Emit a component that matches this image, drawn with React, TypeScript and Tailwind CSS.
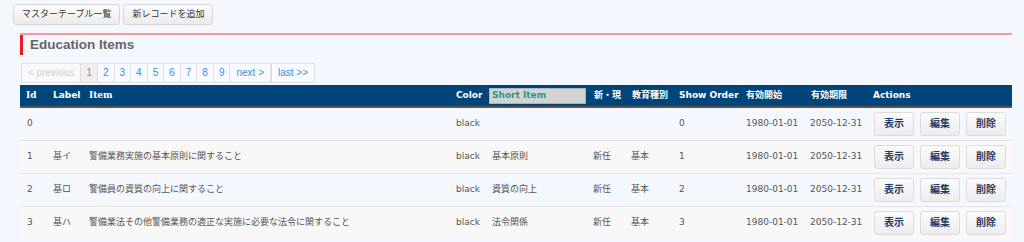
import React from "react";

const rows = [
  { id: "0", label: "", item: "", color: "black", short: "", nw: "", kind: "", order: "0" },
  { id: "1", label: "基イ", item: "警備業務実施の基本原則に関すること", color: "black", short: "基本原則", nw: "新任", kind: "基本", order: "1" },
  { id: "2", label: "基ロ", item: "警備員の資質の向上に関すること", color: "black", short: "資質の向上", nw: "新任", kind: "基本", order: "2" },
  { id: "3", label: "基ハ", item: "警備業法その他警備業務の適正な実施に必要な法令に関すること", color: "black", short: "法令関係", nw: "新任", kind: "基本", order: "3" },
];

const widths = [26, 36, 367, 35, 103, 38, 47, 67, 65, 62, 146];

function TopButton({ children }: { children: React.ReactNode }) {
  return (
    <button className="h-[21px] px-[8px] rounded-[3px] border border-[#d6d6d6] bg-gradient-to-b from-[#fbfbfb] to-[#ebebeb] text-[9px] text-[#333] leading-none">
      {children}
    </button>
  );
}

function ActionButton({ children }: { children: React.ReactNode }) {
  return (
    <button className="w-[40px] h-[24px] rounded-[3px] border border-[#dcdcdc] bg-gradient-to-b from-[#fcfcfc] to-[#ececec] text-[10px] font-bold text-[#1e3c66] leading-none">
      {children}
    </button>
  );
}

export default function App() {
  const sans = { fontFamily: '"DejaVu Sans", "Noto Sans CJK JP", sans-serif' };
  const pages = ["1", "2", "3", "4", "5", "6", "7", "8", "9"];
  return (
    <div className="min-h-screen w-[1024px] bg-[#f4f8fe] pt-[4px]" style={sans}>
      <div className="flex gap-[3px] ml-[13px]">
        <TopButton>マスターテーブル一覧</TopButton>
        <TopButton>新レコードを追加</TopButton>
      </div>

      <div className="mt-[8px] ml-[20px] mr-[12px]">
        <div className="h-[2px] bg-[#f59b9b]" />
        <div className="h-[20px] flex">
          <div className="w-[3px] bg-[#ee1c1c]" />
          <div className="flex items-center pl-[7px]">
            <span className="text-[13.5px] font-bold text-[#666]" style={{ fontFamily: '"Liberation Sans", Arial, sans-serif' }}>
              Education Items
            </span>
          </div>
        </div>
      </div>

      <div className="mt-[8px] ml-[21px] flex h-[20px] text-[10px] leading-none" style={{ fontFamily: '"Liberation Sans", Arial, sans-serif' }}>
        <span className="flex items-center px-[6px] border border-[#e0e0e0] bg-[#f8f9fb] text-[#cfcfcf]">&lt; previous</span>
        {pages.map((p, i) => (
          <span
            key={p}
            className={
              i === 0
                ? "flex items-center px-[5px] border border-l-0 border-[#e0e0e0] bg-[#eeeeee] text-[#d9725e]"
                : "flex items-center px-[5px] border border-l-0 border-[#e0e0e0] bg-[#f8faff] text-[#3d8fe0]"
            }
          >
            {p}
          </span>
        ))}
        <span className="flex items-center px-[6px] border border-l-0 border-[#e0e0e0] bg-[#f8faff] text-[#3d8fe0]">next &gt;</span>
        <span className="flex items-center px-[6px] border border-[#e0e0e0] bg-[#f8faff] text-[#3d8fe0]">last &gt;&gt;</span>
      </div>

      <table className="mt-[2px] ml-[20px] w-[992px] border-collapse table-fixed">
        <colgroup>
          {widths.map((w, i) => (
            <col key={i} style={{ width: w }} />
          ))}
        </colgroup>
        <thead>
          <tr className="h-[22px] bg-[#00457a] border-b-2 border-b-[#555] text-white text-[9px] font-bold">
            <th className="text-left pl-[6px]" style={{ fontFamily: '"DejaVu Serif", serif' }}>Id</th>
            <th className="text-left pl-[7px]">Label</th>
            <th className="text-left pl-[7px]" style={{ fontFamily: '"DejaVu Serif", serif' }}>Item</th>
            <th className="text-left pl-[7px]">Color</th>
            <th className="text-left pl-[5px] pr-[1px]">
              <div className="h-[16px] bg-[#d3d3d3] border border-[#aab4be] text-[#1d9a8a] flex items-center pl-[2px]">Short Item</div>
            </th>
            <th className="text-left pl-[7px] whitespace-nowrap">新・現</th>
            <th className="text-left pl-[7px] whitespace-nowrap">教育種別</th>
            <th className="text-left pl-[7px] whitespace-nowrap">Show Order</th>
            <th className="text-left pl-[7px] whitespace-nowrap">有効開始</th>
            <th className="text-left pl-[7px] whitespace-nowrap">有効期限</th>
            <th className="text-left pl-[7px]">Actions</th>
          </tr>
        </thead>
        <tbody className="text-[9px] text-[#555]">
          {rows.map((r, i) => (
            <tr key={r.id} className={(i % 2 === 0 ? "bg-[#f4f8fe]" : "bg-[#f8f8f8]") + " h-[33px] border-t border-[#e4e6ea]"}>
              <td className="pl-[7px]">{r.id}</td>
              <td className="pl-[7px] whitespace-nowrap">{r.label}</td>
              <td className="pl-[7px] whitespace-nowrap">{r.item}</td>
              <td className="pl-[7px]">{r.color}</td>
              <td className="pl-[8px] whitespace-nowrap">{r.short}</td>
              <td className="pl-[6px]">{r.nw}</td>
              <td className="pl-[6px]">{r.kind}</td>
              <td className="pl-[7px]">{r.order}</td>
              <td className="pl-[7px] whitespace-nowrap">1980-01-01</td>
              <td className="pl-[6px] whitespace-nowrap">2050-12-31</td>
              <td className="pl-[8px]">
                <div className="flex gap-[6px]">
                  <ActionButton>表示</ActionButton>
                  <ActionButton>編集</ActionButton>
                  <ActionButton>削除</ActionButton>
                </div>
              </td>
            </tr>
          ))}
        </tbody>
      </table>
    </div>
  );
}
